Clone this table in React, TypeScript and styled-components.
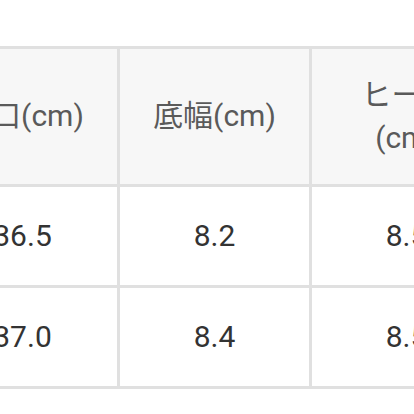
import styled, { createGlobalStyle } from "styled-components";

const GlobalStyle = createGlobalStyle`
  html, body {
    margin: 0;
    padding: 0;
    background: #fff;
    overflow: hidden;
  }
  body {
    font-family: Roboto, "Noto Sans CJK JP", sans-serif;
  }
`;

const Page = styled.div`
  width: 414px;
  height: 414px;
  padding-top: 46px;
  box-sizing: border-box;
  overflow: hidden;
`;

const Table = styled.table`
  margin-left: -75px;
  border-collapse: separate;
  border-spacing: 0;
  border-top: 3px solid #e0e0e0;
  border-left: 3px solid #e0e0e0;
  table-layout: fixed;
  width: 579px;
`;

const Cell = styled.td<{ $head?: boolean }>`
  box-sizing: border-box;
  width: 192px;
  height: ${(p) => (p.$head ? 138 : 101)}px;
  padding: 0 22px;
  border-right: 3px solid #e0e0e0;
  border-bottom: 3px solid #e0e0e0;
  text-align: center;
  vertical-align: middle;
  font-size: 30px;
  line-height: 1.42;
  background: ${(p) => (p.$head ? "#f7f7f7" : "#fff")};
  color: ${(p) => (p.$head ? "#5a5a5a" : "#333")};
`;

const rows = [
  ["36.5", "8.2", "8.5"],
  ["37.0", "8.4", "8.5"],
];

export default function App() {
  return (
    <Page>
      <GlobalStyle />
      <Table>
        <tbody>
          <tr>
            <Cell $head>筒口(cm)</Cell>
            <Cell $head>底幅(cm)</Cell>
            <Cell $head>
              ヒール
              <br />
              (cm)
            </Cell>
          </tr>
          {rows.map((r, i) => (
            <tr key={i}>
              {r.map((v, j) => (
                <Cell key={j}>{v}</Cell>
              ))}
            </tr>
          ))}
        </tbody>
      </Table>
    </Page>
  );
}
